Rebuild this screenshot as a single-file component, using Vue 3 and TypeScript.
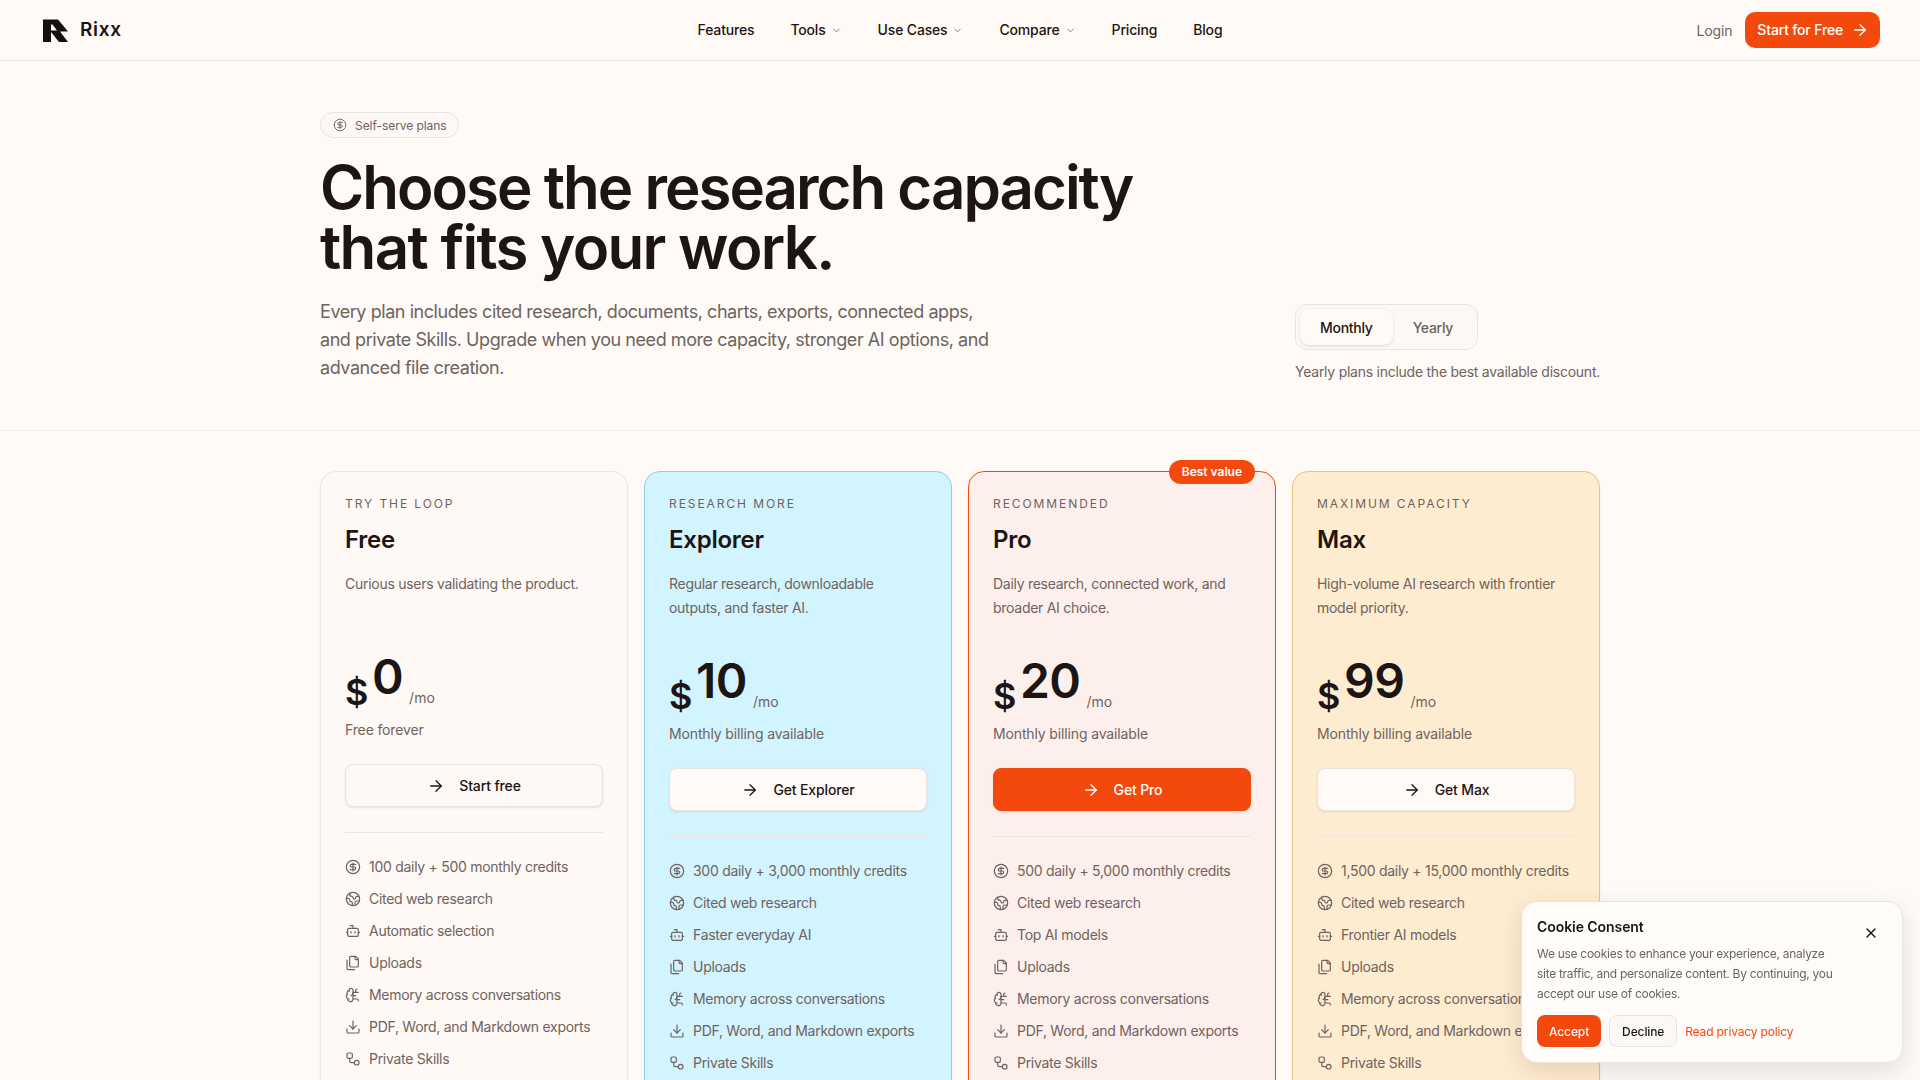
<script setup lang="ts">
const circle = (cx: number, cy: number, r: number) =>
  `M${cx - r} ${cy}a${r} ${r} 0 1 0 ${2 * r} 0a${r} ${r} 0 1 0 ${-2 * r} 0`

const icons: Record<string, string[]> = {
  coin: [circle(12, 12, 10), 'M16 8h-6a2 2 0 1 0 0 4h4a2 2 0 1 1 0 4H8', 'M12 18V6'],
  earth: [
    'M21.54 15H17a2 2 0 0 0-2 2v4.54',
    'M7 3.34V5a3 3 0 0 0 3 3a2 2 0 0 1 2 2c0 1.1.9 2 2 2a2 2 0 0 0 2-2c0-1.1.9-2 2-2h3.17',
    'M11 21.95V18a2 2 0 0 0-2-2a2 2 0 0 1-2-2v-1a2 2 0 0 0-2-2H2.05',
    circle(12, 12, 10),
  ],
  bot: ['M12 8V4H8', 'M6 8h12a2 2 0 0 1 2 2v8a2 2 0 0 1-2 2H6a2 2 0 0 1-2-2v-8a2 2 0 0 1 2-2Z', 'M2 14h2', 'M20 14h2', 'M15 13v2', 'M9 13v2'],
  files: [
    'M20 7h-3a2 2 0 0 1-2-2V2',
    'M9 18a2 2 0 0 1-2-2V4a2 2 0 0 1 2-2h7l4 4v10a2 2 0 0 1-2 2Z',
    'M3 7.6v12.8A1.6 1.6 0 0 0 4.6 22h9.8',
  ],
  brain: [
    'M12 5a3 3 0 1 0-5.997.125 4 4 0 0 0-2.526 5.77 4 4 0 0 0 .556 6.588A4 4 0 1 0 12 18Z',
    'M9 13a4.5 4.5 0 0 0 3-4',
    'M6.003 5.125A3 3 0 0 0 6.401 6.5',
    'M3.477 10.896a4 4 0 0 1 .585-.396',
    'M6 18a4 4 0 0 1-1.967-.516',
    'M12 13h4',
    'M12 18h6a2 2 0 0 1 2 2v1',
    'M12 8h8',
    'M16 8V5a2 2 0 0 1 2-2',
  ],
  download: ['M21 15v4a2 2 0 0 1-2 2H5a2 2 0 0 1-2-2v-4', 'M7 10l5 5 5-5', 'M12 15V3'],
  skills: ['M5 3h4a2 2 0 0 1 2 2v4a2 2 0 0 1-2 2H5a2 2 0 0 1-2-2V5a2 2 0 0 1 2-2Z', circle(17.5, 17.5, 3.5), 'M7 11v4a2.5 2.5 0 0 0 2.5 2.5H14'],
}

const navItems = [
  { label: 'Features', caret: false },
  { label: 'Tools', caret: true },
  { label: 'Use Cases', caret: true },
  { label: 'Compare', caret: true },
  { label: 'Pricing', caret: false },
  { label: 'Blog', caret: false },
]

const iconOrder = ['coin', 'earth', 'bot', 'files', 'brain', 'download', 'skills']

const plans = [
  {
    key: 'free', eyebrow: 'TRY THE LOOP', name: 'Free', desc: 'Curious users validating the product.',
    price: '0', billing: 'Free forever', cta: 'Start free',
    features: ['100 daily + 500 monthly credits', 'Cited web research', 'Automatic selection'],
  },
  {
    key: 'explorer', eyebrow: 'RESEARCH MORE', name: 'Explorer', desc: 'Regular research, downloadable outputs, and faster AI.',
    price: '10', billing: 'Monthly billing available', cta: 'Get Explorer',
    features: ['300 daily + 3,000 monthly credits', 'Cited web research', 'Faster everyday AI'],
  },
  {
    key: 'pro', eyebrow: 'RECOMMENDED', name: 'Pro', desc: 'Daily research, connected work, and broader AI choice.',
    price: '20', billing: 'Monthly billing available', cta: 'Get Pro',
    features: ['500 daily + 5,000 monthly credits', 'Cited web research', 'Top AI models'],
  },
  {
    key: 'max', eyebrow: 'MAXIMUM CAPACITY', name: 'Max', desc: 'High-volume AI research with frontier model priority.',
    price: '99', billing: 'Monthly billing available', cta: 'Get Max',
    features: ['1,500 daily + 15,000 monthly credits', 'Cited web research', 'Frontier AI models'],
  },
]

const sharedFeatures = ['Uploads', 'Memory across conversations', 'PDF, Word, and Markdown exports', 'Private Skills']
</script>

<template>
  <div class="page">
    <header class="nav">
      <a class="brand">
        <svg class="logo" viewBox="0 0 25 23" aria-hidden="true">
          <path fill-rule="evenodd" d="M0 0.5H15L25 12.5H17L25 23H16L8 13V23H0ZM8 5.5V11.5H14L9.5 5.5Z" fill="#15100e" />
        </svg>
        <span>Rixx</span>
      </a>
      <nav class="links">
        <a v-for="item in navItems" :key="item.label" class="link">
          {{ item.label }}
          <svg v-if="item.caret" class="caret" viewBox="0 0 24 24"><path d="M6 9l6 6 6-6" /></svg>
        </a>
      </nav>
      <div class="actions">
        <a class="login">Login</a>
        <a class="start">
          Start for Free
          <svg class="arrow" viewBox="0 0 24 24"><path d="M5 12h14" /><path d="M12 5l7 7-7 7" /></svg>
        </a>
      </div>
    </header>

    <section class="hero">
      <div class="hero-inner">
        <div class="hero-main">
          <span class="badge">
            <svg class="icon" viewBox="0 0 24 24"><path v-for="d in icons.coin" :key="d" :d="d" /></svg>
            Self-serve plans
          </span>
          <h1>Choose the research capacity<br /><span class="second">that fits your work.</span></h1>
          <p class="lede">Every plan includes cited research, documents, charts, exports, connected apps, and private Skills. Upgrade when you need more capacity, stronger AI options, and advanced file creation.</p>
        </div>
        <div class="billing">
          <div class="toggle">
            <button class="tab active">Monthly</button>
            <button class="tab">Yearly</button>
          </div>
          <p class="note">Yearly plans include the best available discount.</p>
        </div>
      </div>
    </section>

    <section class="plans">
      <article v-for="plan in plans" :key="plan.key" class="card" :class="plan.key">
        <span v-if="plan.key === 'pro'" class="flag">Best value</span>
        <p class="eyebrow">{{ plan.eyebrow }}</p>
        <h2>{{ plan.name }}</h2>
        <p class="desc">{{ plan.desc }}</p>
        <div class="price">
          <span class="currency">$</span>
          <span class="amount">{{ plan.price }}</span>
          <span class="per">/mo</span>
        </div>
        <p class="bill">{{ plan.billing }}</p>
        <a class="cta">
          <svg class="arrow" viewBox="0 0 24 24"><path d="M5 12h14" /><path d="M12 5l7 7-7 7" /></svg>
          {{ plan.cta }}
        </a>
        <hr />
        <ul>
          <li v-for="(feat, i) in [...plan.features, ...sharedFeatures]" :key="feat">
            <svg class="icon" viewBox="0 0 24 24"><path v-for="d in icons[iconOrder[i]]" :key="d" :d="d" /></svg>
            {{ feat }}
          </li>
        </ul>
      </article>
    </section>

    <aside class="cookie">
      <div class="cookie-copy">
        <h3>Cookie Consent</h3>
        <p>We use cookies to enhance your experience, analyze site traffic, and personalize content. By continuing, you accept our use of cookies.</p>
      </div>
      <svg class="close" viewBox="0 0 24 24"><path d="M18 6L6 18" /><path d="M6 6l12 12" /></svg>
      <div class="cookie-actions">
        <button class="accept">Accept</button>
        <button class="decline">Decline</button>
        <a class="policy">Read privacy policy</a>
      </div>
    </aside>
  </div>
</template>

<style scoped>
.page {
  height: 1080px;
  overflow: hidden;
  background: #fffaf6;
  color: #1c1513;
  font-family: Inter, "Noto Sans", sans-serif;
  position: relative;
}
svg { fill: none; stroke: currentColor; stroke-width: 2; stroke-linecap: round; stroke-linejoin: round; flex: none; }
a { cursor: pointer; }

.nav {
  height: 60px;
  border-bottom: 1px solid #ebe6e3;
  display: grid;
  grid-template-columns: 1fr auto 1fr;
  align-items: center;
  padding: 0 40px 0 43px;
}
.brand { display: flex; align-items: center; gap: 12px; font-size: 19px; line-height: 24px; font-weight: 600; letter-spacing: 0.035em; }
.logo { width: 25px; height: 23px; stroke: none; }
.links { display: flex; gap: 36px; font-size: 14px; font-weight: 500; letter-spacing: -0.012em; margin-left: -3px; }
.link { display: flex; align-items: center; gap: 5px; line-height: 20px; }
.caret { width: 11px; height: 11px; color: #6f6360; stroke-width: 1.75; }
.actions { display: flex; justify-content: flex-end; align-items: center; gap: 13px; }
.login { font-size: 14px; line-height: 19px; color: #6f6360; letter-spacing: -0.01em; }
.start {
  height: 36px; padding: 0 11px 0 12px; background: #f4490c; color: #fff; border-radius: 10px; line-height: 20px;
  display: flex; align-items: center; gap: 8px; font-size: 14px; font-weight: 500; letter-spacing: -0.012em;
}
.arrow { width: 18px; height: 18px; stroke-width: 1.75; }

.hero { border-bottom: 1px solid #f0ebe8; padding-top: 51px; box-sizing: border-box; height: 370px; }
.hero-inner { width: 1280px; margin: 0 auto; display: flex; justify-content: space-between; align-items: flex-end; }
.hero-main { width: 720px; }
.badge {
  display: inline-flex; align-items: center; gap: 8px; height: 26px; padding: 0 11px 0 12px; box-sizing: border-box;
  border: 1px solid #ebe3e0; border-radius: 13px; background: #fdf8f5; font-size: 12px; color: #6f6360; letter-spacing: -0.005em;
}
.badge .icon { width: 14px; height: 14px; stroke-width: 1.6; }
h1 { margin: 19px 0 0; font-size: 60px; line-height: 60px; font-weight: 600; letter-spacing: -0.033em; white-space: nowrap; }
.second { letter-spacing: -0.028em; }
.lede { margin: 21px 0 0; font-size: 18px; line-height: 28px; color: #6f6360; width: 680px; letter-spacing: -0.0245em; }
.billing { display: flex; flex-direction: column; align-items: flex-start; }
.toggle { display: flex; padding: 4px; border: 1px solid #ebe3e0; border-radius: 12px; background: #fcf8f5; }
.tab {
  height: 36px; padding: 0 20px; border: 0; background: none; border-radius: 9px;
  font: 500 14px Inter, sans-serif; color: #6f6360; letter-spacing: -0.02em;
}
.tab.active { background: #fffaf6; color: #1c1513; box-shadow: 0 1px 3px rgba(40, 20, 10, .14); }
.note { margin: 12px 0 0; font-size: 14px; line-height: 20px; color: #6f6360; letter-spacing: -0.018em; }

.plans { width: 1280px; margin: 40px auto 0; display: grid; grid-template-columns: repeat(4, minmax(0, 1fr)); gap: 16px; align-items: start; }
.card { position: relative; padding: 24px; border: 1px solid #ebe6e3; border-radius: 16px; background: #fef9f5; box-shadow: 0 1px 3px rgba(40, 20, 10, .05); }
.card.explorer { background: #d2f4ff; border-color: #8dd0e6; }
.card.pro { background: #fdf0ec; border-color: #f4490c; }
.card.max { background: #feecd0; border-color: #ecc383; }
.flag {
  position: absolute; top: -12px; right: 20px; height: 24px; padding: 0 13px; border-radius: 12px;
  background: #f4490c; color: #fff; font-size: 12px; font-weight: 600; line-height: 24px;
}
.eyebrow { margin: 0; font-size: 12px; line-height: 16px; letter-spacing: 0.16em; color: #6f6360; }
h2 { margin: 12px 0 0; font-size: 24px; line-height: 32px; font-weight: 600; letter-spacing: -0.01em; }
.desc { margin: 16px 0 0; font-size: 14px; line-height: 24px; color: #6f6360; min-height: 44px; letter-spacing: -0.02em; }
.price { margin-top: 41px; display: flex; align-items: flex-end; gap: 6px; height: 56px; }
.currency { font-size: 36px; line-height: 40px; font-weight: 600; margin-bottom: 1px; }
.amount { font-size: 48px; line-height: 48px; font-weight: 600; margin: 0 0 12px -2.5px; letter-spacing: -0.01em; }
.per { font-size: 14px; line-height: 20px; color: #6f6360; margin-bottom: 5px; }
.bill { margin: 7px 0 0; font-size: 14px; line-height: 20px; color: #6f6360; letter-spacing: -0.01em; }
.cta {
  margin-top: 24px; height: 43px; box-sizing: border-box; display: flex; align-items: center; justify-content: center; gap: 14px;
  border: 1px solid #ebe3e0; border-radius: 8px; background: #fef9f5; font-size: 14px; font-weight: 500; letter-spacing: -0.01em;
  box-shadow: 0 1px 2px rgba(40, 20, 10, .1);
}
.explorer .cta, .max .cta { background: #fffaf6; }
.pro .cta { background: #f4490c; color: #fff; border-color: #f4490c; }
hr { margin: 25px 0 22px; border: 0; border-top: 1px solid #ebe6e3; }
ul { list-style: none; margin: 0; padding: 0 0 80px; display: grid; gap: 8px; }
li { display: flex; align-items: center; gap: 8px; font-size: 14px; line-height: 24px; color: #6f6360; white-space: nowrap; letter-spacing: -0.02em; }
li .icon { width: 16px; height: 16px; stroke-width: 1.8; }

.cookie {
  position: fixed; right: 17px; bottom: 17px; width: 382px; box-sizing: border-box; padding: 15px;
  background: #fffcfa; border: 1px solid #ebe3e0; border-radius: 16px; box-shadow: 0 8px 24px rgba(40, 20, 10, .12);
}
.cookie-copy { width: 306px; }
h3 { margin: 0; font-size: 14px; line-height: 20px; font-weight: 600; letter-spacing: -0.005em; }
.cookie p { margin: 7px 0 0; font-size: 12px; line-height: 20px; color: #6f6360; letter-spacing: -0.024em; }
.close { position: absolute; top: 23px; right: 23px; width: 16px; height: 16px; }
.cookie-actions { margin-top: 11px; display: flex; align-items: center; gap: 8px; }
.cookie-actions button { height: 32px; border-radius: 8px; font: 500 12px Inter, sans-serif; padding: 0 12px; letter-spacing: -0.01em; }
.accept { background: #f4490c; color: #fff; border: 0; }
.decline { background: #fdf8f5; color: #1c1513; border: 1px solid #ebe3e0; }
.policy { font-size: 12px; color: #f4490c; letter-spacing: -0.012em; }
</style>
